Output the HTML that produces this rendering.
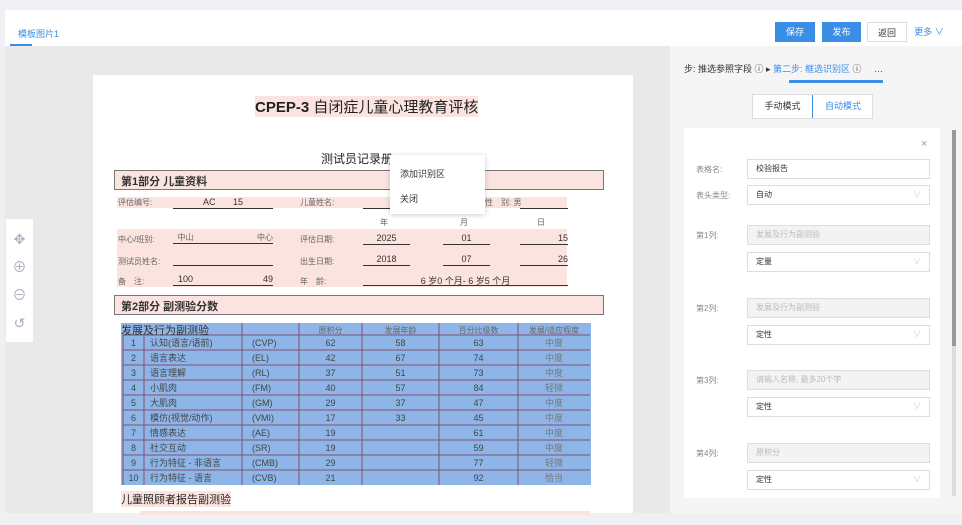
<!DOCTYPE html><html><head><meta charset="utf-8"><style>
*{margin:0;padding:0;box-sizing:border-box}
body{width:962px;height:525px;overflow:hidden;background:#eef0f4;font-family:"Liberation Sans","Noto Sans CJK SC",sans-serif;position:relative;font-size:9px;color:#333}
.a{position:absolute}
.btn{position:absolute;top:22px;height:20px;font-size:9px;line-height:20px;text-align:center}
.pk{background:#fbe3df}
.lbl{color:#666;font-size:8px}
.ln{border-bottom:1px solid #333}
.tb{position:absolute;left:121px;top:323px;width:470px;height:162px;background:#8db5e8}
.fr{position:absolute;left:696px;font-size:8px;color:#888}
.in{position:absolute;left:747px;width:183px;height:20px;border:1px solid #ddd;font-size:8px;line-height:18px;padding-left:8px;background:#fff}
.in.d{background:#f3f3f3;color:#bbb}
.in .v{position:absolute;right:8px;top:0;color:#ccc}
</style></head><body>
<div class="a" style="left:5px;top:10px;width:957px;height:36px;background:#fff"></div>
<div class="a" style="left:18px;top:27px;color:#3a8ee6;font-size:9px">模板图片1</div>
<div class="a" style="left:10px;top:44px;width:22px;height:2px;background:#3a8ee6"></div>
<div class="btn" style="left:775px;width:40px;background:#3a8ee6;color:#fff">保存</div>
<div class="btn" style="left:822px;width:39px;background:#3a8ee6;color:#fff">发布</div>
<div class="btn" style="left:867px;width:40px;border:1px solid #ddd;background:#fff">返回</div>
<div class="btn" style="left:912px;width:34px;color:#3a8ee6">更多 ∨</div>
<div class="a" style="left:5px;top:46px;width:665px;height:467px;background:#e9e9e9"></div>
<div class="a" style="left:6px;top:219px;width:27px;height:123px;background:#fff;color:#a8afbd;font-size:14px;text-align:center;line-height:28px;padding-top:6px">✥<br>⊕<br>⊖<br>↺</div>
<div class="a" style="left:93px;top:75px;width:540px;height:438px;background:#fff"></div>
<div class="a" style="left:255px;top:96px;font-size:15px;font-weight:bold;color:#222;background:#fbe3df">CPEP-3 <span style="font-weight:normal">自闭症儿童心理教育评核</span></div>
<div class="a" style="left:321px;top:150px;font-size:12px;color:#222">测试员记录册</div>
<div class="a pk" style="left:114px;top:170px;width:490px;height:20px;border:1px solid #777;font-size:11px;font-weight:bold;padding:2px 6px">第1部分 儿童资料</div>
<div class="a pk" style="left:117px;top:197px;width:450px;height:11px"></div>
<div class="a pk" style="left:117px;top:229px;width:450px;height:58px"></div>
<div class="a lbl" style="left:118px;top:197px">评估编号:</div><div class="a ln" style="left:173px;top:197px;width:100px;height:12px;text-align:center">AC&nbsp;&nbsp;&nbsp;&nbsp;&nbsp;&nbsp;&nbsp;15</div>
<div class="a lbl" style="left:300px;top:197px">儿童姓名:</div><div class="a ln" style="left:363px;top:197px;width:110px;height:12px"></div>
<div class="a lbl" style="left:485px;top:197px">性　别: 男</div><div class="a ln" style="left:520px;top:197px;width:48px;height:12px"></div>
<div class="a lbl" style="left:380px;top:217px">年</div><div class="a lbl" style="left:460px;top:217px">月</div><div class="a lbl" style="left:537px;top:217px">日</div>
<div class="a lbl" style="left:118px;top:234px">中心/班别:</div><div class="a ln lbl" style="left:173px;top:232px;width:100px;height:12px">&nbsp;&nbsp;中山<span style="float:right">中心</span></div>
<div class="a lbl" style="left:300px;top:234px">评估日期:</div>
<div class="a ln" style="left:363px;top:233px;width:47px;height:12px;text-align:center">2025</div><div class="a ln" style="left:443px;top:233px;width:47px;height:12px;text-align:center">01</div><div class="a ln" style="left:520px;top:233px;width:48px;height:12px;text-align:right">15</div>
<div class="a lbl" style="left:118px;top:256px">测试员姓名:</div><div class="a ln" style="left:173px;top:254px;width:100px;height:12px"></div>
<div class="a lbl" style="left:300px;top:256px">出生日期:</div>
<div class="a ln" style="left:363px;top:254px;width:47px;height:12px;text-align:center">2018</div><div class="a ln" style="left:443px;top:254px;width:47px;height:12px;text-align:center">07</div><div class="a ln" style="left:520px;top:254px;width:48px;height:12px;text-align:right">26</div>
<div class="a lbl" style="left:118px;top:276px">备　注:</div><div class="a ln" style="left:173px;top:274px;width:100px;height:12px">&nbsp;&nbsp;100<span style="float:right">49</span></div>
<div class="a lbl" style="left:300px;top:276px">年　龄:</div><div class="a ln" style="left:363px;top:274px;width:205px;height:12px;text-align:center">6 岁0 个月- 6 岁5 个月</div>
<div class="a pk" style="left:114px;top:295px;width:490px;height:20px;border:1px solid #777;font-size:11px;font-weight:bold;padding:2px 6px">第2部分 副测验分数</div>
<div class="tb"></div>
<svg class="a" style="left:0;top:0" width="962" height="525">
<g stroke="#8a4d6e" stroke-width="1">
<line x1="123" y1="335" x2="123" y2="485"/><line x1="144" y1="335" x2="144" y2="485"/><line x1="242" y1="323" x2="242" y2="485"/><line x1="299" y1="323" x2="299" y2="485"/><line x1="362" y1="323" x2="362" y2="485"/><line x1="439" y1="323" x2="439" y2="485"/><line x1="518" y1="323" x2="518" y2="485"/>
<line x1="123" y1="335" x2="590" y2="335"/><line x1="123" y1="350" x2="590" y2="350"/><line x1="123" y1="365" x2="590" y2="365"/><line x1="123" y1="380" x2="590" y2="380"/><line x1="123" y1="395" x2="590" y2="395"/><line x1="123" y1="410" x2="590" y2="410"/><line x1="123" y1="425" x2="590" y2="425"/><line x1="123" y1="440" x2="590" y2="440"/><line x1="123" y1="455" x2="590" y2="455"/><line x1="123" y1="470" x2="590" y2="470"/>
</g></svg>
<div class="a" style="left:121px;top:322px;font-size:11px;color:#333">发展及行为副测验</div>
<div class="a" style="left:299px;top:325px;width:291px;font-size:8px;color:#666;display:flex"><span style="width:63px;text-align:center">原积分</span><span style="width:77px;text-align:center">发展年龄</span><span style="width:79px;text-align:center">百分比级数</span><span style="width:72px;text-align:center">发展/适应程度</span></div>
<div class="a" style="left:123px;top:336px;width:467px;font-size:9px;color:#444;line-height:15px">
<div style="display:flex"><span style="width:21px;text-align:center">1</span><span style="width:98px;padding-left:6px">认知(语言/语前)</span><span style="width:57px;padding-left:10px">(CVP)</span><span style="width:63px;text-align:center">62</span><span style="width:77px;text-align:center">58</span><span style="width:79px;text-align:center">63</span><span style="width:72px;text-align:center;color:#777">中度</span></div>
<div style="display:flex"><span style="width:21px;text-align:center">2</span><span style="width:98px;padding-left:6px">语言表达</span><span style="width:57px;padding-left:10px">(EL)</span><span style="width:63px;text-align:center">42</span><span style="width:77px;text-align:center">67</span><span style="width:79px;text-align:center">74</span><span style="width:72px;text-align:center;color:#777">中度</span></div>
<div style="display:flex"><span style="width:21px;text-align:center">3</span><span style="width:98px;padding-left:6px">语言理解</span><span style="width:57px;padding-left:10px">(RL)</span><span style="width:63px;text-align:center">37</span><span style="width:77px;text-align:center">51</span><span style="width:79px;text-align:center">73</span><span style="width:72px;text-align:center;color:#777">中度</span></div>
<div style="display:flex"><span style="width:21px;text-align:center">4</span><span style="width:98px;padding-left:6px">小肌肉</span><span style="width:57px;padding-left:10px">(FM)</span><span style="width:63px;text-align:center">40</span><span style="width:77px;text-align:center">57</span><span style="width:79px;text-align:center">84</span><span style="width:72px;text-align:center;color:#777">轻微</span></div>
<div style="display:flex"><span style="width:21px;text-align:center">5</span><span style="width:98px;padding-left:6px">大肌肉</span><span style="width:57px;padding-left:10px">(GM)</span><span style="width:63px;text-align:center">29</span><span style="width:77px;text-align:center">37</span><span style="width:79px;text-align:center">47</span><span style="width:72px;text-align:center;color:#777">中度</span></div>
<div style="display:flex"><span style="width:21px;text-align:center">6</span><span style="width:98px;padding-left:6px">模仿(视觉/动作)</span><span style="width:57px;padding-left:10px">(VMI)</span><span style="width:63px;text-align:center">17</span><span style="width:77px;text-align:center">33</span><span style="width:79px;text-align:center">45</span><span style="width:72px;text-align:center;color:#777">中度</span></div>
<div style="display:flex"><span style="width:21px;text-align:center">7</span><span style="width:98px;padding-left:6px">情感表达</span><span style="width:57px;padding-left:10px">(AE)</span><span style="width:63px;text-align:center">19</span><span style="width:77px"></span><span style="width:79px;text-align:center">61</span><span style="width:72px;text-align:center;color:#777">中度</span></div>
<div style="display:flex"><span style="width:21px;text-align:center">8</span><span style="width:98px;padding-left:6px">社交互动</span><span style="width:57px;padding-left:10px">(SR)</span><span style="width:63px;text-align:center">19</span><span style="width:77px"></span><span style="width:79px;text-align:center">59</span><span style="width:72px;text-align:center;color:#777">中度</span></div>
<div style="display:flex"><span style="width:21px;text-align:center">9</span><span style="width:98px;padding-left:6px">行为特征 - 非语言</span><span style="width:57px;padding-left:10px">(CMB)</span><span style="width:63px;text-align:center">29</span><span style="width:77px"></span><span style="width:79px;text-align:center">77</span><span style="width:72px;text-align:center;color:#777">轻微</span></div>
<div style="display:flex"><span style="width:21px;text-align:center">10</span><span style="width:98px;padding-left:6px">行为特征 - 语言</span><span style="width:57px;padding-left:10px">(CVB)</span><span style="width:63px;text-align:center">21</span><span style="width:77px"></span><span style="width:79px;text-align:center">92</span><span style="width:72px;text-align:center;color:#777">恰当</span></div>
</div>
<div class="a" style="left:121px;top:491px;font-size:11px;color:#222;background:#fbe3df">儿童照顾者报告副测验</div>
<div class="a pk" style="left:140px;top:511px;width:450px;height:4px"></div>
<div class="a" style="left:390px;top:155px;width:95px;height:59px;background:#fff;box-shadow:0 1px 5px rgba(0,0,0,.2);font-size:9px;color:#333"><div style="position:absolute;left:10px;top:12px">添加识别区</div><div style="position:absolute;left:10px;top:37px">关闭</div></div>
<div class="a" style="left:670px;top:46px;width:292px;height:467px;background:#f5f5f5"></div>
<div class="a" style="left:684px;top:62px;font-size:9px;color:#333;white-space:nowrap">步: 推选参照字段 ⓘ ▸ <span style="color:#3a8ee6">第二步: 框选识别区</span> ⓘ&nbsp;&nbsp;&nbsp;&nbsp;&nbsp;…</div>
<div class="a" style="left:789px;top:80px;width:94px;height:3px;background:#3a8ee6"></div>
<div class="a" style="left:752px;top:94px;width:121px;height:25px;background:#fff;border:1px solid #ddd;font-size:9px;line-height:23px"><span style="position:absolute;left:0;width:59px;text-align:center">手动模式</span><span style="position:absolute;left:59px;width:61px;text-align:center;color:#3a8ee6;border-left:1px solid #3a8ee6;height:23px">自动模式</span></div>
<div class="a" style="left:684px;top:128px;width:256px;height:370px;background:#fff"></div>
<div class="a" style="left:921px;top:138px;color:#999;font-size:11px">×</div>
<div class="a" style="left:952px;top:130px;width:4px;height:216px;background:#999"></div>
<div class="a" style="left:952px;top:346px;width:4px;height:150px;background:#ddd"></div>
<div class="fr" style="top:164px">表格名:</div><div class="in" style="top:159px;color:#333">校验报告</div>
<div class="fr" style="top:190px">表头类型:</div><div class="in" style="top:185px;color:#333">自动<span class="v">∨</span></div>
<div class="fr" style="top:230px">第1列:</div><div class="in d" style="top:225px">发展及行为副测验</div><div class="in" style="top:252px;color:#333">定量<span class="v">∨</span></div>
<div class="fr" style="top:303px">第2列:</div><div class="in d" style="top:298px">发展及行为副测验</div><div class="in" style="top:325px;color:#333">定性<span class="v">∨</span></div>
<div class="fr" style="top:375px">第3列:</div><div class="in d" style="top:370px">请输入名称, 最多20个字</div><div class="in" style="top:397px;color:#333">定性<span class="v">∨</span></div>
<div class="fr" style="top:448px">第4列:</div><div class="in d" style="top:443px">原积分</div><div class="in" style="top:470px;color:#333">定性<span class="v">∨</span></div>
</body></html>
